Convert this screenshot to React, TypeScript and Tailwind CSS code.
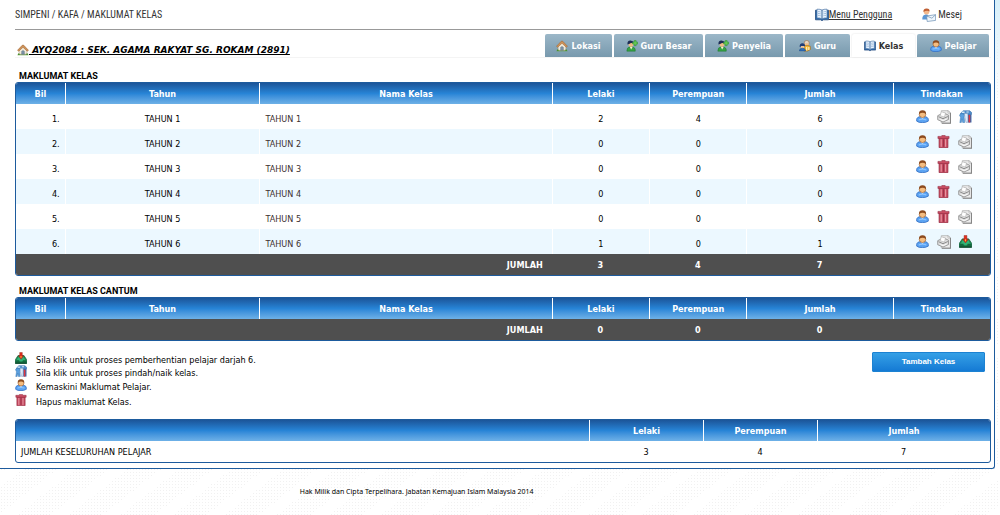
import type { ReactNode } from "react";
import { clsx } from "clsx";

type IconName = "house" | "userAdd" | "staff" | "book" | "person" | "mail" | "trash" | "printer" | "move" | "graduate";

type Kelas = {
  tahun: string;
  nama: string;
  lelaki: number;
  perempuan: number;
  actions: IconName[];
};

const TABS: { label: string; icon: IconName; active?: boolean; width: string }[] = [
  { label: "Lokasi", icon: "house", width: "w-[67px]" },
  { label: "Guru Besar", icon: "userAdd", width: "w-[89px]" },
  { label: "Penyelia", icon: "userAdd", width: "w-[78px]" },
  { label: "Guru", icon: "staff", width: "w-[65px]" },
  { label: "Kelas", icon: "book", active: true, width: "w-[63px]" },
  { label: "Pelajar", icon: "person", width: "w-[72px]" },
];

const KELAS: Kelas[] = [
  { tahun: "TAHUN 1", nama: "TAHUN 1", lelaki: 2, perempuan: 4, actions: ["person", "printer", "move"] },
  { tahun: "TAHUN 2", nama: "TAHUN 2", lelaki: 0, perempuan: 0, actions: ["person", "trash", "printer"] },
  { tahun: "TAHUN 3", nama: "TAHUN 3", lelaki: 0, perempuan: 0, actions: ["person", "trash", "printer"] },
  { tahun: "TAHUN 4", nama: "TAHUN 4", lelaki: 0, perempuan: 0, actions: ["person", "trash", "printer"] },
  { tahun: "TAHUN 5", nama: "TAHUN 5", lelaki: 0, perempuan: 0, actions: ["person", "trash", "printer"] },
  { tahun: "TAHUN 6", nama: "TAHUN 6", lelaki: 1, perempuan: 0, actions: ["person", "printer", "graduate"] },
];

const LEGEND: { icon: IconName; text: string; height: string }[] = [
  { icon: "graduate", text: "Sila klik untuk proses pemberhentian pelajar darjah 6.", height: "h-[13px]" },
  { icon: "move", text: "Sila klik untuk proses pindah/naik kelas.", height: "h-[14px]" },
  { icon: "person", text: "Kemaskini Maklumat Pelajar.", height: "h-[15px]" },
  { icon: "trash", text: "Hapus maklumat Kelas.", height: "h-[14px]" },
];

const ACTION_LABELS: Partial<Record<IconName, string>> = {
  person: "Kemaskini",
  trash: "Hapus",
  printer: "Cetak",
  move: "Pindah kelas",
  graduate: "Pemberhentian",
};

const ICONS: Record<IconName, ReactNode> = {
  house: (
    <>
      <path d="M0.5 13h13l-1-2h-11z" fill="#5fa23c" />
      <path d="M2.5 6.5 7 2.5l4.5 4V12h-9z" fill="#f1ead9" stroke="#a89a80" strokeWidth=".6" />
      <path d="M5.4 12V8.5Q7 6.6 8.6 8.5V12z" fill="#7c93a8" stroke="#5d6f80" strokeWidth=".5" />
      <path d="M.6 7.4 6 1.6Q7 .7 8 1.6l5.400 5.800-1.400 1L7 3.800 2 8.400z" fill="#cf9258" stroke="#9b6533" strokeWidth=".6" />
      <path d="M1 12.400q1-2.500 2.400 0M10.600 12.400q1-2.500 2.400 0" fill="#3f8a2b" />
    </>
  ),
  userAdd: (
    <>
      <path d="M1 13q-.2-4.500 3.700-5l3.600.3Q11.500 9.500 10.800 13z" fill="#35a343" stroke="#1e7630" strokeWidth=".6" />
      <path d="M4.500 8.200 6 11l1.700-2.800z" fill="#f4f1d2" />
      <circle cx="5.800" cy="5.200" r="2.900" fill="#eebd84" />
      <path d="M1.700 5.300Q1.200.7 5.200.6l3.400 1.200.2 1.900Q5.700 2.700 3.700 4.600z" fill="#1d2c55" />
      <path d="M9.600.7h2.200v1.800h1.900v2.200h-1.900v1.900H9.600V4.700H7.700V2.500h1.900z" fill="#65c951" stroke="#248a2b" strokeWidth=".6" />
    </>
  ),
  staff: (
    <>
      <circle cx="9" cy="3.400" r="2.900" fill="#e3d4c4" stroke="#9a6131" strokeWidth=".6" />
      <path d="M6.600 4.200q2.500-1.500 5 0 0 3-2.500 3-2.500 0-2.500-3z" fill="#f2c18e" />
      <path d="M6 13V7q3-1.800 7.200.2L13.400 11q-2.800 2.600-7.400 2z" fill="#efb52f" stroke="#9b5e16" strokeWidth=".6" />
      <path d="M.8 8.200Q.4 3.800 4 3.700q3.300.2 3 4.200z" fill="#1d3a74" />
      <path d="M2 7h4.500q.2 3-2.200 3Q2 10 2 7z" fill="#f0c493" />
      <path d="M.4 12.700Q.5 9.700 4 9.500q3.500.1 3.800 3.200z" fill="#2e6fba" stroke="#1d4885" strokeWidth=".5" />
      <path d="M9 8.200v4M11.500 8.200v3.500" stroke="#fff4d2" strokeWidth="1.200" />
    </>
  ),
  book: (
    <>
      <path d="M.5 2.200h13v9.600H8.200L7 12.800l-1.200-1H.5z" fill="#2f69ab" stroke="#244c80" strokeWidth=".8" />
      <path d="M2 1.200Q5.500.8 7 2.400v8.600Q5 9.500 2 10zM12 1.200Q8.500.8 7 2.400v8.600Q9 9.500 12 10z" fill="#e9f3ff" stroke="#4f78a8" strokeWidth=".7" />
      <path d="M3 3.600q1.500-.2 2.700.4M3 5.500q1.500-.2 2.700.4M3 7.400q1.500-.2 2.700.4M11 3.600q-1.500-.2-2.700.4M11 5.500q-1.500-.2-2.700.4M11 7.400q-1.500-.2-2.700.4" fill="none" stroke="#8fb0d2" strokeWidth=".8" />
    </>
  ),
  person: (
    <>
      <path d="M.8 12Q0 8.200 3.600 7.300h6.800q3.600.9 2.800 4.700Q10 13.900 7 13.500 3 13.900.8 12z" fill="#5ba3f2" stroke="#3470c4" strokeWidth=".9" />
      <path d="M3 10q3.800-1.600 8 0v1.200q-4-1.200-8 0z" fill="#8cc4ff" />
      <path d="M4.600 7.300h4.800L7 9.500z" fill="#d9ecff" />
      <ellipse cx="7" cy="4.800" rx="3.500" ry="3.300" fill="#f5bd80" stroke="#9a5d2b" strokeWidth=".7" />
      <path d="M3.300 4.500Q2.700.4 7 .3q4.300.1 3.700 4.200-1.600-1.500-3.700-1.500T3.300 4.500z" fill="#8d4b1e" />
    </>
  ),
  mail: (
    <>
      <circle cx="4.500" cy="3.700" r="2.800" fill="#f3b98d" />
      <path d="M1.500 4Q1 .5 4.500.4t3 3Q4.600 2 1.500 4z" fill="#bf5f34" />
      <path d="M.3 11.500Q0 6.700 4 6.500q3.200.1 3.800 5z" fill="#5b97d6" />
      <path d="M4.700 8 13.600 6.700v5.700l-8.400 1.100z" fill="#eff6fc" stroke="#6c8fb3" strokeWidth=".7" />
      <path d="m4.700 8 5.200 2.200 3.700-3.500" fill="none" stroke="#6c8fb3" strokeWidth=".7" />
    </>
  ),
  trash: (
    <>
      <path d="M2.200 3.500h9.600V13.600H2.200z" fill="#c64a60" stroke="#93293f" strokeWidth=".7" />
      <path d="M4.500 4.500v8.200M9.300 4.500v8.200" stroke="#eba0ac" strokeWidth="1.100" />
      <path d="M7 4.500v8.200" stroke="#9a3349" strokeWidth="1.100" />
      <path d="M1 1.500h4.200V.5h3.600v1h4.200v2.300H1z" fill="#c94c62" stroke="#93293f" strokeWidth=".6" />
    </>
  ),
  printer: (
    <>
      <path d="M4.300.7h7l2.200 2.200v10.200H4.300z" fill="#ececec" stroke="#b0b0b0" strokeWidth=".8" />
      <path d="M13.500 3v10.200H5" fill="none" stroke="#858585" strokeWidth="1.100" />
      <path d="M11 .7v2.400h2.400z" fill="#fff" stroke="#999" strokeWidth=".5" />
      <path d="m.7 5.700 5.600-2.900 5.200 2.400v4.300l-5.500 2.500L.7 9.700z" fill="#dedede" stroke="#8a8a8a" strokeWidth=".8" />
      <path d="m1.500 6.700 4.500 2 4.900-2.200" fill="none" stroke="#777" strokeWidth=".8" />
      <path d="m3.200 5.700 1.100-3.900 4.200 1.100-1 4.100z" fill="#fff" stroke="#a5a5a5" strokeWidth=".5" />
      <path d="m3.500 9.500 2.700 1.200 3.500-1.600" fill="none" stroke="#fff" strokeWidth=".9" />
    </>
  ),
  move: (
    <>
      <path d="M1.700 3.500 4.500.8h7l2.100 1.900v2H1.700z" fill="#4d8dcb" stroke="#2f67a4" strokeWidth=".6" />
      <path d="M.5 5.300q2.400-3.200 5.500 0l-.5 2.500.7 5.700H4L3.200 9.500l-.7 4H.9L1.700 8z" fill="#5a9fdf" stroke="#3472ac" strokeWidth=".5" />
      <path d="M5.800 3.700h3.700v9.600H7.600L6.300 8z" fill="#dceafa" stroke="#7798bd" strokeWidth=".6" />
      <path d="M9.700 4.500h3.700v9H9.700z" fill="#3568ac" />
      <path d="M10.300 5.500h1.800v8h-1.800z" fill="#e0383f" />
      <path d="M3 1.700h3v1.500H3zM8 1.500h2.500v1.200H8z" fill="#d7e9f8" />
    </>
  ),
  graduate: (
    <>
      <path d="M3.500 4.200h7L13.600 9v4.300H.4V9z" fill="#1d8d54" stroke="#145b38" strokeWidth=".8" />
      <path d="M3.700 6h6.600l1.500 3.200H9.400Q9 10.900 7 10.900T4.600 9.200H2.200z" fill="#32b276" />
      <path d="M.4 9.800h3.900q.7 2 2.700 2t2.700-2h3.900v3.500H.4z" fill="#12683e" />
      <path d="M.4 13h13.200" stroke="#123f29" strokeWidth=".9" />
      <path d="M5.500.5h3v4H10L7 8.500 4 4.500h1.500z" fill="#e42c20" stroke="#8f2a15" strokeWidth=".5" />
      <path d="M6.500 4.700h1v2h-1z" fill="#f4cc36" />
    </>
  ),
};

function Icon({ name, className = "size-3" }: { name: IconName; className?: string }) {
  return (
    <svg viewBox="0 0 14 14" className={clsx("shrink-0", className)} aria-hidden="true">
      {ICONS[name]}
    </svg>
  );
}

const HEAD = "bg-linear-to-b from-[#1c5599] via-[#2784d6] to-[#6eb1e7] text-white font-bold";
const HEAD_CELL = "h-[21px] p-0 border-l border-white first:border-l-0 text-center";
const PANEL = "overflow-hidden rounded-[3px] border border-[#1d5b9d]";

function KelasTable({ rows, label }: { rows: Kelas[]; label: string }) {
  const lelaki = rows.reduce((sum, r) => sum + r.lelaki, 0);
  const perempuan = rows.reduce((sum, r) => sum + r.perempuan, 0);

  return (
    <section>
      <h2 className="pl-1 font-['Roboto','Liberation_Sans',sans-serif] text-[9px] leading-[11px] font-bold text-black">{label}</h2>
      <div className={PANEL}>
        <table className="w-full table-fixed border-separate border-spacing-0" aria-label={label}>
          <colgroup>
            <col className="w-[5%]" />
            <col className="w-[20%]" />
            <col className="w-[30%]" />
            <col className="w-[10%]" />
            <col className="w-[10%]" />
            <col className="w-[15%]" />
            <col className="w-[10%]" />
          </colgroup>
          <thead className={HEAD}>
            <tr>
              {["Bil", "Tahun", "Nama Kelas", "Lelaki", "Perempuan", "Jumlah", "Tindakan"].map((h) => (
                <th key={h} className={HEAD_CELL}>{h}</th>
              ))}
            </tr>
          </thead>
          <tbody>
            {rows.map((row, index) => (
              <tr key={row.tahun} className="text-center even:bg-[#ecf8ff] *:h-[25px] *:border-l *:border-white *:p-0 *:pt-1 *:first:border-l-0">
                <td className="text-right"><span className="pr-[5px]">{index + 1}.</span></td>
                <td>{row.tahun}</td>
                <td className="text-left text-[#3c3030]"><span className="pl-[5px]">{row.nama}</span></td>
                <td>{row.lelaki}</td>
                <td>{row.perempuan}</td>
                <td>{row.lelaki + row.perempuan}</td>
                <td>
                  <div className="-mt-1 flex items-center justify-center gap-2 pl-1">
                    {row.actions.map((a) => (
                      <button key={a} type="button" aria-label={`${ACTION_LABELS[a]} ${row.nama}`} className="cursor-pointer">
                        <Icon name={a} className={a === "printer" ? "size-[14px]" : "size-[13px]"} />
                      </button>
                    ))}
                  </div>
                </td>
              </tr>
            ))}
          </tbody>
          <tfoot className="bg-[#4f4f4f] font-bold text-white">
            <tr className="text-center *:h-[21px] *:p-0">
              <td colSpan={3} className="text-right"><span className="pr-[9px]">JUMLAH</span></td>
              <td>{lelaki}</td>
              <td>{perempuan}</td>
              <td>{lelaki + perempuan}</td>
              <td />
            </tr>
          </tfoot>
        </table>
      </div>
    </section>
  );
}

export default function App() {
  return (
    <div className="min-h-screen bg-[repeating-linear-gradient(142deg,transparent_0_21px,white_21px_32px),radial-gradient(#f1f1f1_1px,white_1px)] bg-size-[auto,3px_3px] font-['DejaVu_Sans_Condensed','DejaVu_Sans',sans-serif] text-[9px] leading-3 text-black">
      <div className="bg-linear-to-b from-[#d6effa] to-transparent to-[100px] pr-[5px]">
        <main className="rounded-br-[3px] border-r border-b border-[#1d5b9d] bg-white pr-[3px] pb-[5px] pl-[15px]">
          <header className="flex h-[30px] items-center justify-between border-b border-[#999] pr-[29px] font-['Roboto_Condensed','Liberation_Sans',sans-serif] text-[10px] text-[#333]">
            <nav>SIMPENI / KAFA / MAKLUMAT KELAS</nav>
            <div className="flex items-center gap-[30px]">
              <a href="#menu" className="flex items-center underline">
                <Icon name="book" className="size-[14px]" />
                Menu Pengguna
              </a>
              <a href="#mesej" className="flex items-center gap-[2px]">
                <Icon name="mail" className="size-[14px]" />
                Mesej
              </a>
            </div>
          </header>

          <div className="mt-[5px] flex h-[23px] items-end justify-between border-b border-[#f4f4f4] pr-[2px]">
            <h1 className="flex items-center self-center pt-2 pl-[2px] font-['DejaVu_Sans',sans-serif] text-[9px] font-bold italic underline">
              <Icon name="house" />
              <span className="whitespace-pre"> AYQ2084 : SEK. AGAMA RAKYAT SG. ROKAM (2891)</span>
            </h1>
            <nav className="flex gap-[2px]">
              {TABS.map((tab) => (
                <a
                  key={tab.label}
                  href={`#${tab.label}`}
                  className={clsx(
                    "flex h-[23px] items-center justify-center gap-[3px] rounded-t-[2px] font-bold",
                    tab.width,
                    tab.active ? "bg-white text-[#333] shadow-[0_0_2px_#ddd]" : "bg-linear-to-b from-[#9bb7c8] to-[#7899ad] text-white",
                  )}
                >
                  <Icon name={tab.icon} />
                  {tab.label}
                </a>
              ))}
            </nav>
          </div>

          <div className="mt-[13px] flex flex-col gap-[10px]">
            <KelasTable rows={KELAS} label="MAKLUMAT KELAS" />
            <KelasTable rows={[]} label="MAKLUMAT KELAS CANTUM" />
          </div>

          <div className="mt-[11px] flex items-start justify-between pr-[6px]">
            <ul>
              {LEGEND.map((item) => (
                <li key={item.icon} className={clsx("flex items-start gap-[9px]", item.height)}>
                  <Icon name={item.icon} className="size-[12px]" />
                  <span className="pt-[2px]">{item.text}</span>
                </li>
              ))}
            </ul>
            <button
              type="button"
              className="h-5 w-[113px] cursor-pointer rounded-[1px] border border-[#1c82d2] bg-linear-to-b from-[#35a0e6] to-[#147ad4] font-['Liberation_Sans',sans-serif] text-[8px] font-bold text-white"
            >
              Tambah Kelas
            </button>
          </div>

          <div className={clsx(PANEL, "mt-[11px]")}>
            <table className="w-full table-fixed border-separate border-spacing-0" aria-label="Jumlah keseluruhan">
              <colgroup>
                <col />
                <col className="w-[114px]" />
                <col className="w-[114px]" />
                <col className="w-[173px]" />
              </colgroup>
              <thead className={HEAD}>
                <tr>
                  <td className={HEAD_CELL} />
                  <th className={HEAD_CELL}>Lelaki</th>
                  <th className={HEAD_CELL}>Perempuan</th>
                  <th className={HEAD_CELL}>Jumlah</th>
                </tr>
              </thead>
              <tbody>
                <tr className="text-center *:h-[21px] *:p-0">
                  <td className="text-left"><span className="pl-[5px]">JUMLAH KESELURUHAN PELAJAR</span></td>
                  <td>3</td>
                  <td>4</td>
                  <td>7</td>
                </tr>
              </tbody>
            </table>
          </div>
        </main>
      </div>

      <footer className="w-5/6 pt-[17px] text-center font-['Noto_Sans',sans-serif] text-[7px]">
        Hak Milik dan Cipta Terpelihara. Jabatan Kemajuan Islam Malaysia 2014
      </footer>
    </div>
  );
}
